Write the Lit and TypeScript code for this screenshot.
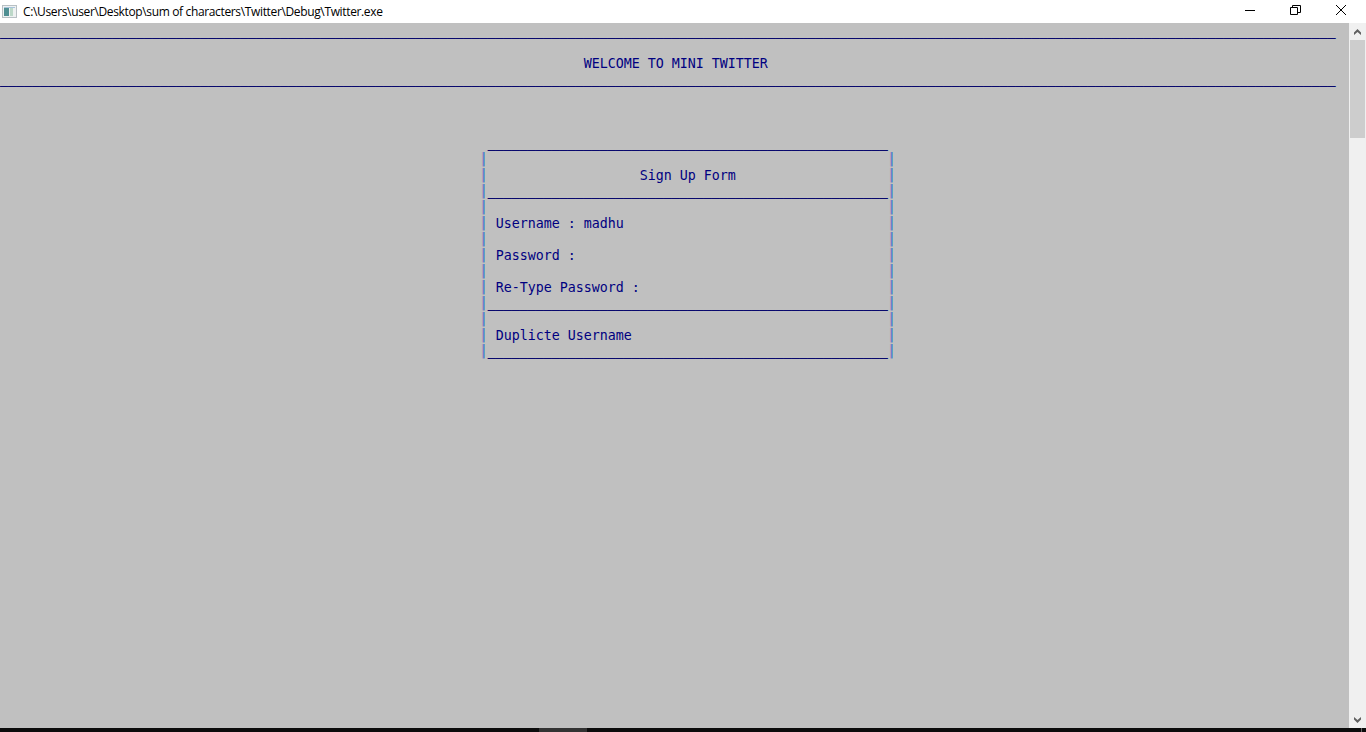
import { LitElement, html, css } from "lit";
import { customElement } from "lit/decorators.js";

type Kind = "t" | "r" | "p";
type Seg = [Kind, string];

const rule = (n: number) => "_".repeat(n);
const pad = (n: number) => " ".repeat(n);
const boxRule = rule(50);

const row = (text = "", col = 62): Seg[] => {
  const inner = pad(col - 61) + text;
  return [
    ["t", pad(60)],
    ["p", "|"],
    ["t", inner + pad(50 - inner.length)],
    ["p", "|"],
  ];
};
const ruled = (): Seg[] => [
  ["t", pad(60)],
  ["p", "|"],
  ["r", boxRule],
  ["p", "|"],
];

const lines: Seg[][] = [
  [["r", rule(167)]],
  [],
  [["t", pad(73) + "WELCOME TO MINI TWITTER"]],
  [["r", rule(167)]],
  [],
  [],
  [],
  [["t", pad(61)], ["r", boxRule]],
  row(),
  row("Sign Up Form", 80),
  ruled(),
  row(),
  row("Username : madhu"),
  row(),
  row("Password :"),
  row(),
  row("Re-Type Password :"),
  ruled(),
  row(),
  row("Duplicte Username"),
  ruled(),
];

@customElement("app-root")
export class AppRoot extends LitElement {
  static styles = css`
    :host {
      display: flex;
      flex-direction: column;
      width: 1366px;
      height: 732px;
      overflow: hidden;
      background: #fff;
    }
    .title {
      flex: none;
      height: 23px;
      display: flex;
      align-items: center;
      background: #fff;
    }
    .app-icon {
      flex: none;
      margin-left: 2px;
      margin-top: 2px;
      width: 16px;
      height: 16px;
    }
    .path {
      margin-left: 5px;
      font: 12px/16px "Open Sans", "Noto Sans", sans-serif;
      color: #000;
      white-space: nowrap;
      flex: 1;
      letter-spacing: -0.355px;
    }
    .controls {
      flex: none;
      display: flex;
      margin-right: 3px;
    }
    .controls svg {
      display: block;
      width: 45px;
      height: 23px;
    }
    .main {
      flex: 1;
      display: flex;
      min-height: 0;
    }
    .console {
      flex: 1;
      background: #c0c0c0;
      color: #000080;
      font: 13.333px/16px "DejaVu Sans Mono", "Liberation Mono", monospace;
      letter-spacing: -0.0273px;
      overflow: hidden;
    }
    .line {
      display: flex;
      height: 16px;
      white-space: pre;
    }
    .t {
      padding-top: 1px;
    }
    .r {
      color: #00006a;
      text-shadow: 0 0 0 #00006a, 0 0 0 #00006a, 0 0 0 #00006a;
    }
    .p {
      color: #1f6fd0;
      text-shadow: -1px 0 0 #b89aac;
    }
    .scroll {
      flex: none;
      width: 17px;
      background: #f0f0f0;
      display: flex;
      flex-direction: column;
      align-items: center;
    }
    .scroll svg {
      flex: none;
      display: block;
      width: 17px;
      height: 17px;
    }
    .thumb {
      flex: none;
      width: 15px;
      height: 98px;
      background: #cdcdcd;
    }
    .track {
      flex: 1;
    }
    .strip {
      flex: none;
      height: 4px;
      display: flex;
      background: #0c0c0c;
    }
    .strip .gap {
      flex: none;
      width: 539px;
    }
    .strip .active {
      flex: none;
      width: 48px;
      background: #333;
    }
    .strip .gap2 {
      flex: none;
      width: 774px;
    }
    .strip .tick {
      flex: none;
      width: 1px;
      background: #666;
    }
  `;

  render() {
    return html`
      <div class="title">
        <svg class="app-icon" viewBox="0 0 16 16">
          <rect x="0.5" y="0.5" width="14" height="12" fill="#eef1f1" stroke="#b8c0c4"/>
          <rect x="2" y="2" width="11" height="1" fill="#a8c4dc"/>
          <rect x="2" y="3" width="5" height="8" fill="#4f8f92"/>
          <rect x="8" y="3" width="3" height="8" fill="#bcd8c8"/>
        </svg>
        <span class="path">C:\\Users\\user\\Desktop\\sum of characters\\Twitter\\Debug\\Twitter.exe</span>
        <div class="controls">
          <svg viewBox="0 0 45 23">
            <path d="M17 10.5H27" stroke="#000" fill="none"/>
          </svg>
          <svg viewBox="0 0 45 23">
            <path d="M17.5 7.5h7v7h-7zM19.5 7.5v-2h8v7h-3" stroke="#000" fill="none"/>
          </svg>
          <svg viewBox="0 0 45 23">
            <path d="M18 5l10 10M28 5L18 15" stroke="#000" fill="none"/>
          </svg>
        </div>
      </div>
      <div class="main">
        <div class="console">
          ${lines.map(
            (segs) => html`<div class="line">${segs.map(
              ([k, s]) => html`<span class=${k}>${s}</span>`
            )}</div>`
          )}
        </div>
        <div class="scroll">
          <svg viewBox="0 0 17 17"><path d="M8.5 6L12 9.5V12L8.5 9L5 12V9.5Z" fill="#606060"/></svg>
          <div class="thumb"></div>
          <div class="track"></div>
          <svg viewBox="0 0 17 17"><path d="M8.5 12L12 8.5V6L8.5 9L5 6V8.5Z" fill="#606060"/></svg>
        </div>
      </div>
      <div class="strip">
        <div class="gap"></div>
        <div class="active"></div>
        <div class="gap2"></div>
        <div class="tick"></div>
      </div>
    `;
  }
}
